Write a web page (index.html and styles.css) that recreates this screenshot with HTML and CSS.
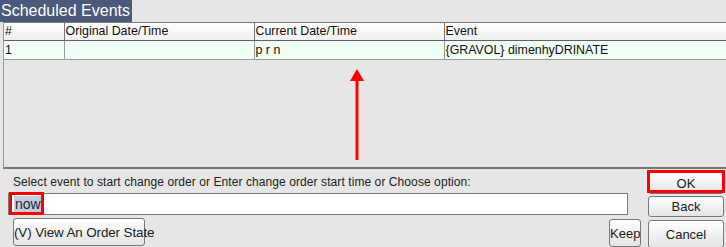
FILE: index.html
```html
<!DOCTYPE html>
<html>
<head>
<meta charset="utf-8">
<link rel="stylesheet" href="styles.css">
</head>
<body>
<div class="page">
  <div class="title">Scheduled Events</div>
  <div class="table-area">
    <table class="grid">
      <colgroup>
        <col class="c1"><col class="c2"><col class="c3"><col class="c4">
      </colgroup>
      <thead>
        <tr><th>#</th><th>Original Date/Time</th><th>Current Date/Time</th><th>Event</th></tr>
      </thead>
      <tbody>
        <tr class="sel"><td>1</td><td></td><td>p r n</td><td>{GRAVOL} dimenhyDRINATE</td></tr>
      </tbody>
    </table>
  </div>
  <div class="bottom">
    <div class="left">
      <div class="label">Select event to start change order or Enter change order start time or Choose option:</div>
      <div class="input"><span class="hl">now</span></div>
      <div class="btn-row">
        <button class="btn view">(V) View An Order State</button>
        <button class="btn keep">Keep</button>
      </div>
    </div>
    <div class="right">
      <button class="btn ok">OK</button>
      <button class="btn back">Back</button>
      <button class="btn cancel">Cancel</button>
    </div>
  </div>
  <div class="mark mark-now"></div>
  <div class="mark mark-ok"></div>
  <svg class="arrow" width="20" height="100" viewBox="0 0 20 100">
    <line x1="10" y1="12" x2="10" y2="91" stroke="#ff0000" stroke-width="3"/>
    <polygon points="10,0 3,12 17,12" fill="#ff0000"/>
  </svg>
</div>
</body>
</html>
```
FILE: styles.css
```css
html, body {
  margin: 0;
  padding: 0;
  background: #e6e6e6;
}
.page {
  position: relative;
  width: 726px;
  height: 247px;
  overflow: hidden;
  font-family: "Liberation Sans", Arial, sans-serif;
  font-size: 12px;
  color: #111;
}
.title {
  display: inline-block;
  background: #4b5a7a;
  color: #ffffff;
  font-size: 16px;
  height: 22px;
  line-height: 21px;
  padding: 0 2px 0 1px;
  vertical-align: top;
}
.table-area {
  margin-left: 3px;
  height: 144px;
  border-top: 1px solid #7c7c7c;
  border-left: 1px solid #9a9a9a;
  border-bottom: 2px solid #777;
  background: #e6e6e6;
}
.grid {
  border-collapse: collapse;
  table-layout: fixed;
  width: 723px;
}
.c1 { width: 60px; }
.c2 { width: 190px; }
.c3 { width: 190px; }
.c4 { width: 283px; }
.grid th {
  font-weight: normal;
  text-align: left;
  height: 16px;
  padding: 0 1px;
  line-height: 17px;
  font-size: 12.4px;
  background: linear-gradient(#ffffff, #f0f0f0);
  border-left: 1px solid #777;
  border-bottom: 1px solid #606060;
}
.grid th:first-child, .grid td:first-child { border-left: none; }
.grid td {
  height: 17px;
  padding: 0 1px;
  line-height: 18px;
  font-size: 12.4px;
  background: #effff4;
  border-left: 1px solid #9a9a9a;
  border-bottom: 1px solid #9a9a9a;
  white-space: nowrap;
}
.bottom {
  display: flex;
}
.left {
  width: 644px;
  padding-left: 8px;
  box-sizing: border-box;
  display: flex;
  flex-direction: column;
}
.label {
  height: 24px;
  line-height: 26px;
  padding-left: 5px;
  font-size: 12px;
  letter-spacing: 0.08px;
  white-space: nowrap;
  color: #222;
}
.input {
  width: 613px;
  height: 20px;
  background: #fff;
  border: 1px solid #7a7a7a;
  display: flex;
  align-items: center;
  padding-left: 5px;
}
.hl {
  background: #c3cddc;
  font-size: 14px;
  line-height: 16px;
  padding: 0 1px;
  color: #1a2438;
}
.btn-row {
  display: flex;
  justify-content: space-between;
  margin-top: 3px;
  padding-left: 5px;
  padding-right: 3px;
}
.btn {
  font-family: "Liberation Sans", Arial, sans-serif;
  font-size: 13px;
  white-space: nowrap;
  color: #1a1a1a;
  background: linear-gradient(#ffffff, #e4e4e4);
  border: 1px solid #7a7a7a;
  border-radius: 3px;
  padding: 0;
  margin: 0;
}
.view {
  width: 132px;
  height: 28px;
  font-size: 13.4px;
  letter-spacing: -0.1px;
}
.keep {
  width: 32px;
  height: 28px;
  margin-top: 1px;
}
.right {
  width: 78px;
  margin-left: 3px;
  display: flex;
  flex-direction: column;
  padding-top: 2px;
}
.ok {
  height: 22px;
  margin: 1px 1px 0 1px;
}
.back {
  height: 21px;
  margin: 2px 1px 0 1px;
}
.cancel {
  height: 28px;
  margin: 3px 1px 0 1px;
}
.mark {
  position: absolute;
  border: 3px solid #ff0000;
  box-sizing: border-box;
}
.mark-now {
  left: 9px;
  top: 192px;
  width: 35px;
  height: 23px;
}
.mark-ok {
  left: 647px;
  top: 170px;
  width: 78px;
  height: 23px;
}
.arrow {
  position: absolute;
  left: 347px;
  top: 69px;
}
```
